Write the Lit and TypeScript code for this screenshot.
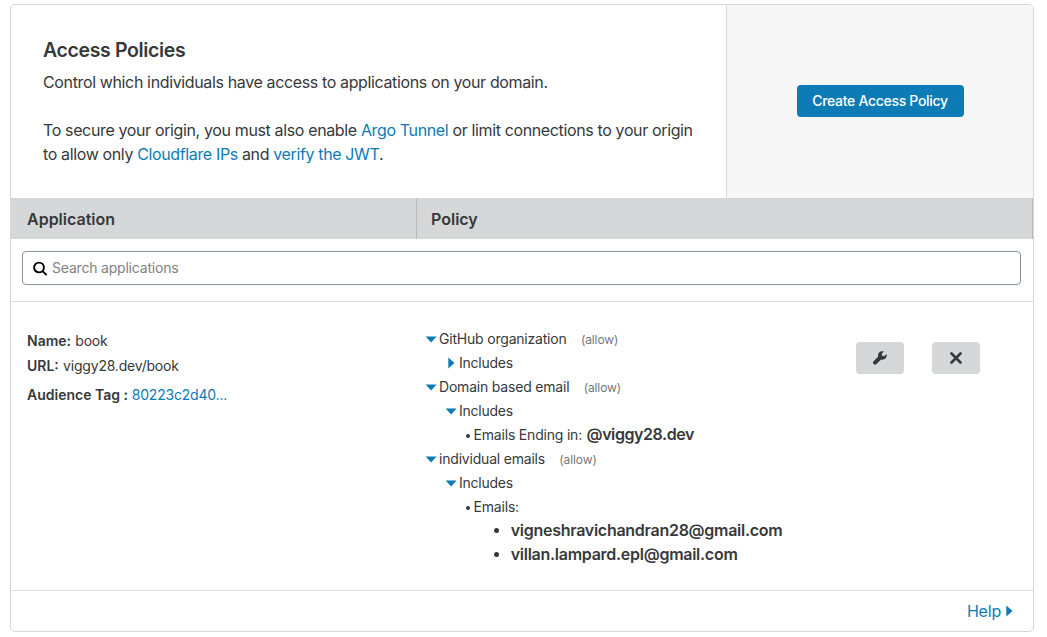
import { LitElement, html, css } from "lit";
import { customElement } from "lit/decorators.js";

interface Policy {
  name: string;
  open: boolean;
  rule?: { label: string; value?: string; items?: string[] };
}

const POLICIES: Policy[] = [
  { name: "GitHub organization", open: false },
  {
    name: "Domain based email",
    open: true,
    rule: { label: "Emails Ending in:", value: "@viggy28.dev" },
  },
  {
    name: "individual emails",
    open: true,
    rule: {
      label: "Emails:",
      items: ["vigneshravichandran28@gmail.com", "villan.lampard.epl@gmail.com"],
    },
  },
];

const caretDown = html`<svg class="down" width="12" height="7" viewBox="0 0 12 7">
  <path d="M.6 .4h11L6.100 6.400z" fill="currentColor" />
</svg>`;
const caretRight = html`<svg class="right" width="7" height="12" viewBox="0 0 7 12">
  <path d="M.3 .5L6.500 6L.3 11.500z" fill="currentColor" />
</svg>`;

@customElement("app-root")
export class AppRoot extends LitElement {
  static styles = css`
    :host {
      display: block;
      box-sizing: border-box;
      height: 637px;
      padding: 4px 13px 5px 10px;
      background: #fff;
      color: #36393a;
      font-family: Inter, "Liberation Sans", sans-serif;
      font-size: 14px;
      line-height: 24px;
      letter-spacing: -0.2px;
    }
    * { box-sizing: border-box; }
    .card {
      height: 628px;
      display: flex;
      flex-direction: column;
      border: 1px solid #d5d7d8;
      border-radius: 5px;
      overflow: hidden;
    }
    a { color: #0d7bb5; text-decoration: none; }
    .intro { height: 193px; display: flex; flex: none; }
    .copy { flex: 1; min-width: 0; padding: 33px 32px 0; font-size: 16px; letter-spacing: -0.365px; white-space: nowrap; }
    h1 { margin: 0; font-size: 19.5px; font-weight: 600; line-height: 24px; }
    p { margin: 8px 0 0; line-height: 24px; }
    p + p { margin-top: 24px; }
    .action {
      width: 307px;
      flex: none;
      padding-bottom: 2px;
      border-left: 1px solid #d5d7d8;
      background: #f7f7f8;
      display: flex;
      align-items: center;
      justify-content: center;
    }
    button { font: inherit; border: 0; padding: 0; border-radius: 4px; display: flex; align-items: center; justify-content: center; }
    .primary { width: 167px; height: 32px; background: #0d7bb5; color: #fff; font-weight: 500; letter-spacing: -0.3px; white-space: nowrap; }
    .head { height: 41px; flex: none; display: flex; padding-top: 1px; background: #d5d7d8; font-size: 16px; font-weight: 600; line-height: 40px; letter-spacing: 0; }
    .head .c1 { width: 406px; padding-left: 16px; border-right: 1px solid #b7bbbd; }
    .head .c2 { flex: 1; padding-left: 14px; border-right: 1px solid #b7bbbd; }
    .search { height: 63px; flex: none; padding: 12px 12px 0 11px; border-bottom: 1px solid #dedfe0; }
    .box { height: 34px; display: flex; align-items: center; padding-left: 10px; gap: 4px; border: 1px solid #8e9396; border-radius: 4px; color: #808285; }
    .row { flex: 1; min-height: 0; display: flex; padding: 0 53px 0 16px; white-space: nowrap; }
    .app { width: 398px; padding-top: 26px; }
    .app div { height: 25px; line-height: 25px; }
    .app div:last-child { margin-top: 4px; }
    .app span { margin-left: 0.5px; }
    b { font-weight: 600; }
    .app b { letter-spacing: 0; }
    .policies { flex: 1; padding-top: 25px; }
    .line { height: 24px; display: flex; align-items: center; }
    .line svg { color: #0d7bb5; flex: none; }
    .down { margin-right: 2px; }
    .sub { padding-left: 20px; letter-spacing: -0.25px; }
    .sub .right { margin: 0 4px 0 3px; }
    .rule { padding-left: 41px; }
    .dot { flex: none; width: 4px; height: 4px; margin: 2px 3.6px 0 0; border-radius: 50%; background: #36393a; }
    .rule b { font-size: 16px; letter-spacing: -0.42px; margin: -2px 0 0 4.600px; }
    .allow { font-size: 12px; letter-spacing: -0.1px; color: #72777b; margin: 1px 0 0 14.300px; }
    .items { margin: -1px 0 0; padding: 0; list-style: none; }
    .items li { height: 24px; display: flex; align-items: center; padding-left: 69px; font-size: 16px; font-weight: 600; letter-spacing: -0.27px; }
    .items .dot { width: 5px; height: 5px; margin: 0 11.700px 0 0; }
    .buttons { display: flex; gap: 28px; padding-top: 40px; }
    .buttons button { width: 48px; height: 32px; background: #d5d7d8; color: #36393a; }
    .foot { height: 41px; flex: none; display: flex; align-items: center; justify-content: flex-end; padding-right: 20px; border-top: 1px solid #dedfe0; font-size: 16px; }
    .foot a { display: flex; align-items: center; gap: 5px; }
  `;

  private policy(p: Policy) {
    return html`
      <div class="line">${caretDown}<span>${p.name}</span><span class="allow">(allow)</span></div>
      <div class="line sub">${p.open ? caretDown : caretRight}<span>Includes</span></div>
      ${p.rule
        ? html`<div class="line rule"><i class="dot"></i><span>${p.rule.label}</span>${p.rule.value ? html`<b>${p.rule.value}</b>` : ""}</div>
            ${p.rule.items ? html`<ul class="items">${p.rule.items.map((i) => html`<li><i class="dot"></i><span>${i}</span></li>`)}</ul>` : ""}`
        : ""}
    `;
  }

  render() {
    return html`
      <div class="card">
        <section class="intro">
          <div class="copy">
            <h1>Access Policies</h1>
            <p>Control which individuals have access to applications on your domain.</p>
            <p>
              To secure your origin, you must also enable <a>Argo Tunnel</a> or limit connections to your origin<br />
              to allow only <a>Cloudflare IPs</a> and <a>verify the JWT</a>.
            </p>
          </div>
          <div class="action"><button class="primary">Create Access Policy</button></div>
        </section>
        <div class="head"><div class="c1">Application</div><div class="c2">Policy</div></div>
        <div class="search">
          <div class="box">
            <svg width="15" height="15" viewBox="0 0 15 15" fill="none" stroke="#000" stroke-width="1.900"><circle cx="6" cy="6.500" r="4.900" /><path d="M9.600 10.100l4 4" /></svg>
            <span>Search applications</span>
          </div>
        </div>
        <section class="row">
          <div class="app">
            <div><b>Name:</b> <span>book</span></div>
            <div><b>URL:</b> <span>viggy28.dev/book</span></div>
            <div><b>Audience Tag :</b> <a>80223c2d40...</a></div>
          </div>
          <div class="policies">${POLICIES.map((p) => this.policy(p))}</div>
          <div class="buttons">
            <button aria-label="Edit"><svg width="14" height="14" viewBox="0 0 14 14"><path fill="currentColor" d="M13.400 3.100L11.200 5.300L9.100 4.800L8.700 2.800L10.900.5C9.200-.1 7.300.3 6.100 1.500C5 2.600 4.800 4.200 5.300 5.600L.6 10.300C-.2 11.100-.2 12.300.6 13.100C1.400 13.900 2.600 13.900 3.400 13.100L8.200 8.500C9.600 9 11.200 8.700 12.300 7.600C13.600 6.400 14 4.600 13.400 3.100z" /></svg></button>
            <button aria-label="Delete"><svg width="12" height="12" viewBox="0 0 12 12"><path d="M1.500 1.500l9 9M10.500 1.500l-9 9" stroke="currentColor" stroke-width="2.600" stroke-linecap="round" /></svg></button>
          </div>
        </section>
        <footer class="foot"><a><span>Help</span>${caretRight}</a></footer>
      </div>
    `;
  }
}
